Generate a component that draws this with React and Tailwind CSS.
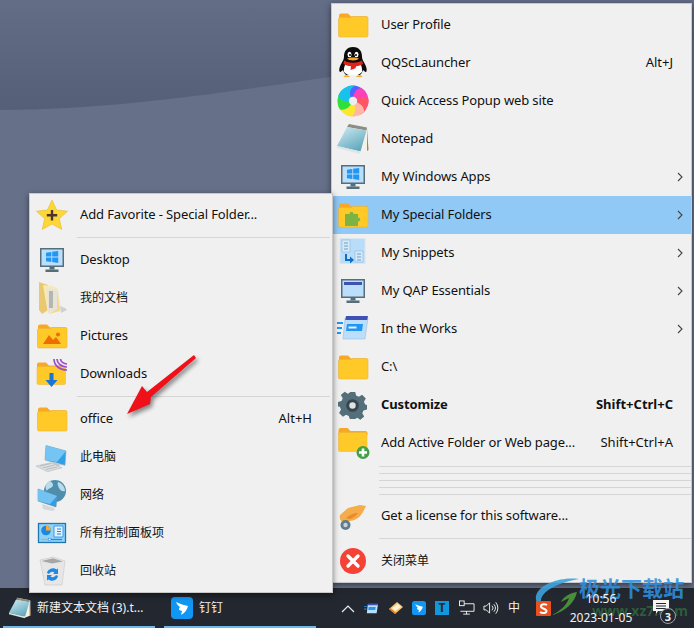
import React from "react";

const font = "font-['Noto_Sans','Noto_Sans_CJK_SC',sans-serif]";

const Folder = ({ children }) => (
  <svg width="32" height="32" viewBox="0 0 32 32">
    <path d="M2 6.500a2 2 0 0 1 2-2h7l3 3h15a2 2 0 0 1 2 2v3H2z" fill="#f9a825" />
    <path d="M1.500 10a1.500 1.500 0 0 1 1.500-1.500h11l2-1h13.500a1.500 1.500 0 0 1 1.500 1.500v17.500a1.500 1.500 0 0 1-1.500 1.500H3a1.500 1.500 0 0 1-1.500-1.500z" fill="#ffca28" stroke="#e8b23a" strokeWidth=".6" />
    {children}
  </svg>
);

const Monitor = ({ children }) => (
  <svg width="32" height="32" viewBox="0 0 32 32">
    <rect x="4" y="4" width="24" height="19" fill="#546e7a" />
    <rect x="5.500" y="5.500" width="21" height="16" fill="#bbdefb" />
    <rect x="13.500" y="23" width="5" height="2.500" fill="#546e7a" />
    <rect x="9.500" y="25.500" width="13" height="2.500" fill="#546e7a" />
    {children}
  </svg>
);

const Win = () => (
  <path d="M10 8.700l5.300-.8v4.600H10zM16.200 7.800l6-.9v5.600h-6zM10 13.400h5.300V18l-5.300-.8zM16.200 13.400h6V19l-6-.9z" fill="#2196f3" />
);

const Qq = () => (
  <svg width="32" height="32" viewBox="0 0 32 32">
    <path d="M16 0c-6.500 0-9 4.500-9 9.500 0 2-.5 3-1.500 5-1.500 2.500-4 7-3 10 .8 1 2 0 3.500-1.500 1 2 1 3.500 3 5h14c2-1.500 2-3 3-5 1.500 1.500 2.700 2.500 3.500 1.500 1-3-1.500-7.500-3-10-1-2-1.500-3-1.500-5C25 4.500 22.500 0 16 0z" fill="#0b0b0b" />
    <path d="M9.500 15c3 2 10 2 13 0 2 3 3 7 2.500 10-2 2.500-5 3.500-9 3.500s-7-1-9-3.500c-.5-3 .5-7 2.500-10z" fill="#fff" />
    <ellipse cx="12.500" cy="7.500" rx="2" ry="2.700" fill="#fff" />
    <ellipse cx="19.500" cy="7.500" rx="2" ry="2.700" fill="#fff" />
    <circle cx="13" cy="8" r="1" fill="#000" />
    <circle cx="19" cy="8" r="1" fill="#000" />
    <path d="M10 11.500c3-1.500 9-1.500 12 0-1.500 2.500-10.500 2.500-12 0z" fill="#f9a825" />
    <path d="M7 13.500c5 3 13 3 18 0l1 3.500c-2 1.500-4.500 2-7 2.200l-.5 2-5 1.800.5-3.800c-3-.2-5.500-1-7.500-2.200z" fill="#e2231a" />
    <path d="M6.500 30c1-2.500 5-2.500 6.500 0zM19 30c1.500-2.500 5.500-2.500 6.500 0z" fill="#f9a825" />
  </svg>
);

const wheelColors = ["#4f63ff", "#ff3fb8", "#ff5566", "#ffb7a6", "#ffe62e", "#2fe03c", "#18c2ea"];

const Wheel = () => (
  <svg width="32" height="32" viewBox="0 0 32 32">
    {wheelColors.map((color, i) => (
      <path
        key={color}
        d="M16 16C11 12 8 7 10.700 1.400A15.500 15.500 0 0 1 29.400 8.250C24 5 18 8 16 16z"
        fill={color}
        transform={`rotate(${(i * 360) / 7} 16 16)`}
      />
    ))}
    <circle cx="16" cy="16" r="4.200" fill="#eeeeee" />
  </svg>
);

const Pad = ({ size = 32, id = "pad" }) => (
  <svg width={size} height={size} viewBox="0 0 32 32">
    <defs>
      <linearGradient id={id} x1="0" y1="0" x2="0.6" y2="1">
        <stop offset="0" stopColor="#d3ecf2" />
        <stop offset="1" stopColor="#62aabf" />
      </linearGradient>
    </defs>
    <path d="M12 1l19 4v22l-8 3z" fill="#f4f1e8" />
    <path d="M30 5l1.500 22-1.500 1z" fill="#a8843f" />
    <path d="M12 1l18 3.500-.5 3L10 4z" fill="#8d8d84" />
    <path d="M10 4l19.500 3.500-6 21L0 23z" fill={`url(#${id})`} />
    <path d="M0 23l23.500 5.500-.5 2.500L0 25z" fill="#dfe5e5" />
  </svg>
);

const Snippets = () => (
  <svg width="32" height="32" viewBox="0 0 32 32">
    <rect x="3" y="1.500" width="25" height="25" fill="#b9dcf9" stroke="#d6e6f3" />
    <rect x="5" y="3" width="8" height="12" fill="#d7e9f8" stroke="#8fb8d8" strokeWidth=".6" />
    <path d="M7 6h4M7 9h4M7 12h4" stroke="#64a0cc" />
    <rect x="18" y="14" width="8" height="11" fill="#d7e9f8" stroke="#8fb8d8" strokeWidth=".6" />
    <path d="M20 17h4M20 20h4M20 23h4" stroke="#64a0cc" />
    <path d="M9 17v6h5" fill="none" stroke="#0d6fc4" strokeWidth="2" />
    <path d="M13 19.500l4 3.500-4 3.500z" fill="#0d6fc4" />
  </svg>
);

const Works = () => (
  <svg width="32" height="32" viewBox="0 0 32 32">
    <path d="M8 5h23l-3 21H6z" fill="#bbdefb" stroke="#90b4d8" strokeWidth=".5" />
    <path d="M9 3h22l-.8 4H8.300z" fill="#3f51b5" />
    <path d="M10 11h16l-1 7H9z" fill="#2196f3" />
    <rect x="11.500" y="13.500" width="8" height="2" fill="#e3f2fd" />
    <path d="M0 9h6v2H0zM0 14h5v2H0zM0 19h4v2H0z" fill="#2196f3" />
  </svg>
);

const Gear = () => (
  <svg width="29" height="29" viewBox="0 0 32 32">
    <path d="M13 1h6l1 4 3 1.300 3.600-2.200 4.100 4.200-2.100 3.600L30 15l2 .5v5l-3.900 1-1.300 3 2.100 3.500-4.200 3.600-3.600-2.100L19 31h-6l-1.100-3.500-3-1.300-3.500 2.100-4.200-4.100 2.100-3.700L2 17.500l-2-.5v-5l3.900-1 1.300-3L3.100 4.500 7.300.9l3.600 2.100L13 2z" fill="#546e7a" />
    <circle cx="16" cy="16" r="7" fill="#37474f" />
    <circle cx="16" cy="16" r="3.500" fill="#dfe3e5" />
  </svg>
);

const AddFolder = () => (
  <svg width="32" height="32" viewBox="0 0 32 32" className="overflow-visible">
    <path d="M1.500 3a2 2 0 0 1 2-2h7l3 3h15a2 2 0 0 1 2 2v2H1.500z" fill="#f9a825" />
    <path d="M1.500 7A1.500 1.500 0 0 1 3 5.500h25.500A1.500 1.500 0 0 1 30 7v16a1.500 1.500 0 0 1-1.500 1.500H3A1.500 1.500 0 0 1 1.500 23z" fill="#ffca28" stroke="#e8b23a" strokeWidth=".5" />
    <circle cx="26" cy="25.500" r="6.500" fill="#43a047" />
    <path d="M24.700 21.500h2.600v2.700H30v2.600h-2.700v2.700h-2.600v-2.700H22v-2.600h2.700z" fill="#fff" />
  </svg>
);

const Tag = () => (
  <svg width="32" height="32" viewBox="0 0 32 32">
    <path d="M11 8l12-3 6 1-3 6c-3 6-9 9-14 9l-4 1c-4 0-6-3-5-7z" fill="#f4ad4a" />
    <path d="M9 18c3-3 8-5 12-5-2 3-5 5-8 6z" fill="#ea8a2c" />
    <circle cx="8.500" cy="25" r="5" fill="#5f7c8e" />
    <circle cx="8.500" cy="25" r="2.200" fill="#c9d2d8" />
  </svg>
);

const CloseIcon = () => (
  <svg width="32" height="32" viewBox="0 0 32 32">
    <circle cx="16" cy="16" r="13" fill="#f44336" />
    <path d="M11 11l10 10M21 11L11 21" stroke="#fff" strokeWidth="3.400" strokeLinecap="round" />
  </svg>
);

const Star = () => (
  <svg width="32" height="32" viewBox="0 0 32 32">
    <path d="M16 1l4.600 10 11 1.200-8.200 7.400 2.300 10.800L16 25l-9.700 5.400 2.300-10.800L.4 12.200l11-1.200z" fill="#fdd835" stroke="#eab72b" strokeWidth=".6" />
    <path d="M14.800 11h2.400v4h4v2.400h-4v4h-2.400v-4h-4V15h4z" fill="#4e342e" />
  </svg>
);

const Docs = () => (
  <svg width="32" height="32" viewBox="0 0 32 32">
    <path d="M3 0l9 3v25l-6 4-3-4z" fill="#e8c96f" />
    <path d="M7 3l10 1 5 3 3 20-13 5z" fill="#f6e8bb" />
    <path d="M11 6l10 2 1 19-10 4z" fill="#e6e4da" />
    <path d="M13 9h4v17h-4z" fill="#8f8f8b" opacity=".55" />
    <path d="M21 8l3 21-11 3 8-5z" fill="#f0d98e" />
    <path d="M24 24l5 2 2 2-6 3z" fill="#d0d0cc" />
  </svg>
);

const PicsFolder = () => (
  <Folder>
    <circle cx="22" cy="14.500" r="2" fill="#ef6c00" />
    <path d="M7 24l6-9 4 5 3-3 5 7z" fill="#ef6c00" />
  </Folder>
);

const Downloads = () => (
  <svg width="32" height="32" viewBox="0 0 32 32" className="overflow-visible">
    <path d="M1 6a1.500 1.500 0 0 1 1.500-1.500H10l3 3h15v4H1z" fill="#f9a825" />
    <path d="M1 10a1.500 1.500 0 0 1 1.500-1.500H28a1.500 1.500 0 0 1 1.500 1.500v15a1.500 1.500 0 0 1-1.500 1.500H2.500A1.500 1.500 0 0 1 1 25z" fill="#ffca28" stroke="#e8b23a" strokeWidth=".5" />
    <path d="M18 1c0 6 5 11 13 11M21 1c0 4 4 8 10 8M24.500 1c0 2.500 3 5 6.500 5" fill="none" stroke="#9c4dcc" strokeWidth="1.700" />
    <path d="M13.500 15h4v7h4l-6 7-6-7h4z" fill="#1976d2" />
  </svg>
);

const PcIcon = () => (
  <svg width="32" height="32" viewBox="0 0 32 32">
    <path d="M10 4.500L30 10l-1 14.300L9 19z" fill="#2f9fe8" stroke="#8ca9bd" strokeWidth=".7" />
    <path d="M10 4.500L30 10l-9 11-12-2z" fill="#74c4f4" />
    <path d="M18 21l6 2-1 2.500-7-1z" fill="#c6cace" />
    <path d="M0 25l15-3.300 11 5-14.500 4z" fill="#dcdedf" stroke="#aab0b4" strokeWidth=".5" />
    <path d="M4 25l11-2.500M7 26.800l11-2.500M10 28.500l11-2.500" stroke="#aab0b4" strokeWidth=".7" />
  </svg>
);

const NetIcon = () => (
  <svg width="32" height="32" viewBox="0 0 32 32">
    <circle cx="19" cy="12" r="11" fill="#4f8dac" />
    <path d="M14 2c3 2 4 4 2 6s-4 1-5 4c-3-4-1-8 3-10zM22 3c4 1 7 5 7 9-3 1-5-1-6-3s-2-4-1-6z" fill="#b8dcec" />
    <path d="M2 10l19 7-1 11-18-6z" fill="#2f9fe8" stroke="#6d8ea5" strokeWidth=".6" />
    <path d="M2 10l19 7-7 8-12-3z" fill="#72c2f2" />
    <path d="M6 25l12 4 1 2-3 1-9-2z" fill="#d5d8da" />
  </svg>
);

const PanelIcon = () => (
  <svg width="32" height="32" viewBox="0 0 32 32">
    <rect x="2.500" y="6.500" width="27" height="19" fill="#8fd3f8" stroke="#1f78b4" strokeWidth="1.300" />
    <circle cx="10" cy="13.500" r="4.800" fill="#1e88e5" />
    <path d="M10 13.500V8.700a4.800 4.800 0 0 1 4.800 4.800z" fill="#ffa726" />
    <path d="M18 9h9v11h-9z" fill="#e3f2fd" stroke="#1e88e5" strokeWidth=".8" />
    <path d="M21 12h4M21 14.500h4M21 17h4" stroke="#1e88e5" strokeWidth="1.100" />
    <path d="M5 22.500h9" stroke="#f5a623" strokeWidth="1.200" />
    <path d="M14 22.500h12" stroke="#1e88e5" strokeWidth="1.200" />
    <rect x="12.500" y="21.300" width="2.400" height="2.400" fill="#fff" stroke="#1e88e5" strokeWidth=".5" />
  </svg>
);

const Bin = () => (
  <svg width="32" height="32" viewBox="0 0 32 32">
    <path d="M4 5l13-3 12 4-3 24H9z" fill="#e6e6e6" stroke="#c7c7c7" strokeWidth=".6" />
    <path d="M5.500 6L17 3.200l10 3.300-11 2z" fill="#a6a6a6" />
    <path d="M11 18a6 6 0 0 1 9.500-3.500l1.500-1v5.500h-5l1.500-1.400a3.500 3.500 0 0 0-5.500 1.400zM22 21a6 6 0 0 1-9.500 3.500l-1.500 1V20h5l-1.500 1.400a3.500 3.500 0 0 0 5.500-1.400z" fill="#1e88e5" />
  </svg>
);

const Chevron = () => (
  <svg width="8" height="10" viewBox="0 0 8 10" className="shrink-0">
    <path d="M2 1l4 4-4 4" fill="none" stroke="#444" strokeWidth="1.100" />
  </svg>
);

const Ding = ({ size }) => (
  <svg width={size} height={size} viewBox="0 0 22 22">
    <rect width="22" height="22" rx="4" fill="#1296f3" />
    <path d="M5 5c4 2 8 3 12 4-1 4-3 7-7 9l1-4-3-1c0-1 0-2 1-3-2-1-3-3-4-5z" fill="#fff" />
  </svg>
);

const rightItems = [
  { icon: <Folder />, label: "User Profile" },
  { icon: <Qq />, label: "QQScLauncher", keys: "Alt+J" },
  { icon: <Wheel />, label: "Quick Access Popup web site" },
  { icon: <Pad />, label: "Notepad" },
  { icon: <Monitor><Win /></Monitor>, label: "My Windows Apps", sub: true },
  {
    icon: (
      <Folder>
        <path d="M8 15h4.500c0-3 4-3 4 0H21v3.500c3 0 3 4 0 4V27H8z" fill="#7cb342" />
      </Folder>
    ),
    label: "My Special Folders",
    sub: true,
    active: true,
  },
  { icon: <Snippets />, label: "My Snippets", sub: true },
  {
    icon: (
      <Monitor>
        <rect x="7" y="7" width="18" height="3" fill="#3f51b5" />
      </Monitor>
    ),
    label: "My QAP Essentials",
    sub: true,
  },
  { icon: <Works />, label: "In the Works", sub: true },
  { icon: <Folder />, label: "C:\\" },
  { icon: <Gear />, label: "Customize", keys: "Shift+Ctrl+C", bold: true },
  { icon: <AddFolder />, label: "Add Active Folder or Web page...", keys: "Shift+Ctrl+A" },
];

const leftTop = [
  { icon: <Monitor><Win /></Monitor>, label: "Desktop" },
  { icon: <Docs />, label: "我的文档", cjk: true },
  { icon: <PicsFolder />, label: "Pictures" },
  { icon: <Downloads />, label: "Downloads" },
];

const leftBottom = [
  { icon: <Folder />, label: "office", keys: "Alt+H" },
  { icon: <PcIcon />, label: "此电脑", cjk: true },
  { icon: <NetIcon />, label: "网络", cjk: true },
  { icon: <PanelIcon />, label: "所有控制面板项", cjk: true },
  { icon: <Bin />, label: "回收站", cjk: true },
];

const MenuRow = ({ item }) => (
  <div className={`flex h-[38px] items-center ${item.active ? "bg-[#90c8f6]" : ""}`}>
    <div className="flex w-[39px] shrink-0 items-center justify-center">{item.icon}</div>
    <span
      className={`ml-[9px] flex-1 truncate ${item.cjk ? "text-[12px]" : "tracking-[-0.12px]"} ${item.bold ? "font-bold" : ""}`}
    >
      {item.label}
    </span>
    {item.keys && <span className={`mr-[18px] ${item.bold ? "font-bold" : ""}`}>{item.keys}</span>}
    {item.sub && (
      <span className="mr-[7px]">
        <Chevron />
      </span>
    )}
  </div>
);

const Sep = ({ className = "" }) => <div className={`h-px bg-[#d5d5d5] ${className}`} />;

export default function App() {
  return (
    <div className={`relative h-[628px] w-[694px] overflow-hidden bg-[#667089] ${font}`}>
      {/* wallpaper */}
      <svg className="absolute inset-0" width="694" height="590" viewBox="0 0 694 590">
        <defs>
          <linearGradient id="band" x1="0" y1="0" x2="0" y2="1">
            <stop offset="0" stopColor="#636d86" />
            <stop offset="1" stopColor="#565f78" />
          </linearGradient>
        </defs>
        <path d="M0 0h694v40L330 77C240 90 120 110 0 110z" fill="url(#band)" />
      </svg>

      {/* taskbar */}
      <div className="absolute bottom-0 left-0 right-0 flex h-[40px] items-center bg-[#23272f] text-[12px] text-[#f2f2f2]">
        <div className="relative flex h-full w-[155px] items-center pl-[9px]">
          <Pad size={22} id="padbar" />
          <span className="ml-[6px] truncate text-[12px]">新建文本文档 (3).t...</span>
          <div className="absolute bottom-0 left-[3px] right-0 h-[2px] bg-[#6fb8ea]" />
        </div>
        <div className="relative ml-[9px] flex h-full w-[152px] items-center pl-[7px]">
          <Ding size={22} />
          <span className="ml-[6px]">钉钉</span>
          <div className="absolute bottom-0 left-0 right-0 h-[2px] bg-[#6fb8ea]" />
        </div>

        {/* tray */}
        <div className="ml-auto flex h-full items-center pr-[23px]">
          <svg width="14" height="9" viewBox="0 0 14 9" className="mr-[9px]">
            <path d="M1 8l6-6 6 6" fill="none" stroke="#eee" strokeWidth="1.200" />
          </svg>
          <svg width="15" height="13" viewBox="0 0 32 28" className="mr-[9px]">
            <path d="M8 5h22l-3 19H6z" fill="#bbdefb" />
            <path d="M9 3h21l-.8 4H8z" fill="#3f51b5" />
            <path d="M10 11h15l-1 6H9z" fill="#2196f3" />
            <path d="M0 9h6v2H0zM0 14h5v2H0z" fill="#2196f3" />
          </svg>
          <svg width="16" height="16" viewBox="0 0 16 16" className="mr-[8px]">
            <path d="M1 9l8-7 6 5-8 7z" fill="#f8c471" />
            <path d="M4 8l6-4 3 3-6 4z" fill="#fdf2d8" />
            <path d="M1 9l6 5 1-1-6-5z" fill="#d9771f" />
          </svg>
          <span className="mr-[9px] flex">
            <Ding size={14} />
          </span>
          <div className="mr-[10px] flex h-[14px] w-[14px] items-center justify-center bg-[#1296dc] text-[12px] font-bold leading-none text-[#23272f]">
            T
          </div>
          <svg width="16" height="16" viewBox="0 0 17 16" className="mr-[8px]">
            <path d="M3.500 3.500H16v8H1.500M8 11.500v3M4.500 14.500h7" fill="none" stroke="#f2f2f2" />
            <rect x=".5" y=".5" width="5" height="5" fill="#23272f" stroke="#f2f2f2" />
          </svg>
          <svg width="16" height="14" viewBox="0 0 17 14" className="mr-[9px]">
            <path d="M1 5h2.500L7 1.500v11L3.500 9H1zM9.500 4.500a3.500 3.500 0 0 1 0 5M11.500 3a6 6 0 0 1 0 8M13.500 1a9 9 0 0 1 0 12" fill="none" stroke="#f2f2f2" />
          </svg>
          <span className="mr-[16px] w-[12px] text-[12px] leading-none">中</span>
          <svg width="15" height="15" viewBox="0 0 15 15" className="relative z-10 mr-[17px]">
            <rect width="15" height="15" rx="1" fill="#e8501e" />
            <path d="M11 4c-2-1.500-6-1-6 1.500S10.500 7.500 10.500 10 6 12.500 4 11" fill="none" stroke="#fff" strokeWidth="2" />
          </svg>
          <div className="relative z-10 mr-[19px] flex w-[66px] flex-col items-center whitespace-nowrap text-[12px] leading-[19px]">
            <span>10:56</span>
            <span>2023-01-05</span>
          </div>
          <div className="relative z-10 h-[26px] w-[18px]">
            <svg width="16" height="14" viewBox="0 0 16 14" className="absolute left-0 top-[5px]">
              <path d="M0 0h16v11H5l-2 3v-3H0z" fill="#f5f5f5" />
              <path d="M3 3.500h10M3 6h10M3 8.500h10" stroke="#23272f" />
            </svg>
            <div className="absolute -bottom-[3px] -right-[5px] flex h-[16px] w-[16px] items-center justify-center rounded-full border border-[#9aa0a8] bg-[#23272f] text-[11px] font-bold leading-none">
              3
            </div>
          </div>
        </div>
      </div>

      {/* right menu */}
      <div className="absolute left-[331px] top-[3px] w-[361px] border border-[#c9c9c9] bg-[#f0f0f0] pb-[2px] pl-px pt-[2px] text-[13px] text-[#111] shadow-[0_2px_6px_rgba(0,0,0,0.5)]">
        {rightItems.map((item) => (
          <MenuRow key={item.label} item={item} />
        ))}
        <div className="flex flex-col gap-1.5 pl-[46px] pt-[4px]">
          <Sep />
          <Sep />
          <Sep />
          <Sep />
          <Sep />
        </div>
        <div className="mt-[2px]">
          <MenuRow item={{ icon: <Tag />, label: "Get a license for this software..." }} />
        </div>
        <Sep className="my-[3px] ml-[46px]" />
        <MenuRow item={{ icon: <CloseIcon />, label: "关闭菜单", cjk: true }} />
      </div>

      {/* left menu */}
      <div className="absolute left-[29px] top-[193px] w-[304px] border border-[#c9c9c9] bg-[#f0f0f0] pb-[2px] pl-[2px] pr-[2px] pt-[2px] text-[13px] text-[#111] shadow-[0_2px_6px_rgba(0,0,0,0.5)]">
        <MenuRow item={{ icon: <Star />, label: "Add Favorite - Special Folder..." }} />
        <Sep className="my-[3px] ml-[45px]" />
        {leftTop.map((item) => (
          <MenuRow key={item.label} item={item} />
        ))}
        <Sep className="my-[3px] ml-[45px]" />
        {leftBottom.map((item) => (
          <MenuRow key={item.label} item={item} />
        ))}
      </div>

      {/* red arrow */}
      <svg
        className="pointer-events-none absolute left-[115px] top-[345px] drop-shadow-[2px_3px_2px_rgba(0,0,0,0.45)]"
        width="100"
        height="80"
        viewBox="0 0 100 80"
      >
        <path d="M12 69L27 41l5 6L79 10l2 3-45 39-1 7z" fill="#f0101a" />
      </svg>

      {/* watermark */}
      <svg className="pointer-events-none absolute left-[534px] top-[577px]" width="46" height="40" viewBox="0 0 46 40">
        <path d="M45 2C28 0 6 6 2 19c-1 5 2 10 8 13-4-5-4-10-1-14C14 11 28 5 45 2z" fill="#3ba3dc" opacity=".9" />
        <path d="M43 15c-2 10-12 20-25 23 8-4 15-10 17-17l-8 4c2-5 9-9 16-10z" fill="#4d9a3c" opacity=".9" />
      </svg>
      <div className="pointer-events-none absolute left-[579px] top-[576px] whitespace-nowrap text-[21px] font-bold leading-[24px] text-[#2f8fdc]/90">
        极光下载站
      </div>
      <div className="pointer-events-none absolute left-[592px] top-[603px] whitespace-nowrap text-[14px] font-bold leading-[16px] text-[#3e9e4a]/45">
        www.xz7.com
      </div>
    </div>
  );
}
